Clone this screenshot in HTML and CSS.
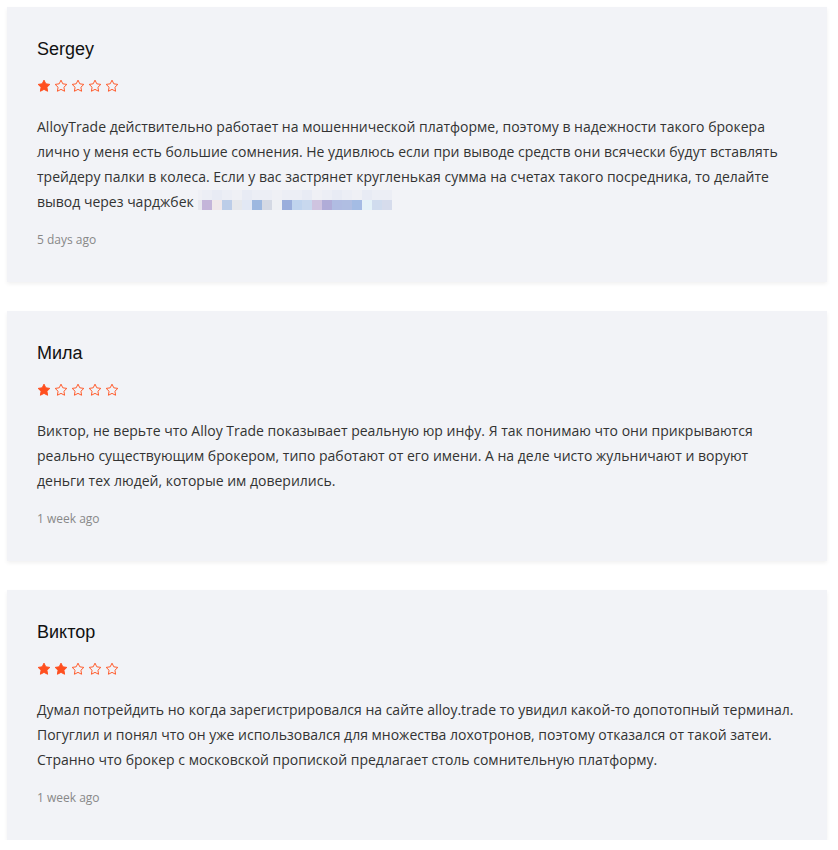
FILE: index.html
```html
<!DOCTYPE html>
<html lang="ru">
<head>
<meta charset="utf-8">
<title>Reviews</title>
<link rel="stylesheet" href="styles.css">
</head>
<body>
<svg width="0" height="0" class="defs">
  <defs>
    <polygon id="star" points="12,2 15.09,8.26 22,9.27 17,14.14 18.18,21.02 12,17.77 5.82,21.02 7,14.14 2,9.27 8.91,8.26"/>
  </defs>
</svg>
<div class="reviews">
  <div class="review">
    <div class="name">Sergey</div>
    <div class="stars">
      <svg class="star full" viewBox="0 0 24 24"><use href="#star"/></svg>
      <svg class="star" viewBox="0 0 24 24"><use href="#star"/></svg>
      <svg class="star" viewBox="0 0 24 24"><use href="#star"/></svg>
      <svg class="star" viewBox="0 0 24 24"><use href="#star"/></svg>
      <svg class="star" viewBox="0 0 24 24"><use href="#star"/></svg>
    </div>
    <p class="text">AlloyTrade действительно работает на мошеннической платформе, поэтому в надежности такого брокера лично у меня есть большие сомнения. Не удивлюсь если при выводе средств они всячески будут вставлять трейдеру палки в колеса. Если у вас застрянет кругленькая сумма на счетах такого посредника, то делайте <span class="nowrap">вывод через чарджбек <span class="blur"><span class="row top"><i></i><i></i><i></i><i></i><i></i><i></i><i></i><i></i><i></i><i></i><i></i><i></i><i></i><i></i><i></i><i></i><i></i><i></i><i></i><i></i></span><span class="row bottom"><i></i><i></i><i></i><i></i><i></i><i></i><i></i><i></i><i></i><i></i><i></i><i></i><i></i><i></i><i></i><i></i><i></i><i></i><i></i><i></i></span></span></span></p>
    <div class="date">5 days ago</div>
  </div>
  <div class="review">
    <div class="name">Мила</div>
    <div class="stars">
      <svg class="star full" viewBox="0 0 24 24"><use href="#star"/></svg>
      <svg class="star" viewBox="0 0 24 24"><use href="#star"/></svg>
      <svg class="star" viewBox="0 0 24 24"><use href="#star"/></svg>
      <svg class="star" viewBox="0 0 24 24"><use href="#star"/></svg>
      <svg class="star" viewBox="0 0 24 24"><use href="#star"/></svg>
    </div>
    <p class="text">Виктор, не верьте что Alloy Trade показывает реальную юр инфу. Я так понимаю что они прикрываются реально существующим брокером, типо работают от его имени. А на деле чисто жульничают и воруют деньги тех людей, которые им доверились.</p>
    <div class="date">1 week ago</div>
  </div>
  <div class="review">
    <div class="name">Виктор</div>
    <div class="stars">
      <svg class="star full" viewBox="0 0 24 24"><use href="#star"/></svg>
      <svg class="star full" viewBox="0 0 24 24"><use href="#star"/></svg>
      <svg class="star" viewBox="0 0 24 24"><use href="#star"/></svg>
      <svg class="star" viewBox="0 0 24 24"><use href="#star"/></svg>
      <svg class="star" viewBox="0 0 24 24"><use href="#star"/></svg>
    </div>
    <p class="text">Думал потрейдить но когда зарегистрировался на сайте alloy.trade то увидил какой-то допотопный терминал. Погуглил и понял что он уже использовался для множества лохотронов, поэтому отказался от такой затеи. Странно что брокер с московской пропиской предлагает столь сомнительную платформу.</p>
    <div class="date">1 week ago</div>
  </div>
</div>
</body>
</html>
```

FILE: styles.css
```css
* { box-sizing: border-box; }
html, body { background: #ffffff; }
body {
  margin: 0;
  padding: 7px 11px 0 7px;
  font-family: "Open Sans", "Liberation Sans", sans-serif;
}
.defs { position: absolute; width: 0; height: 0; }
.reviews {
  display: flex;
  flex-direction: column;
  gap: 29px;
  width: 820px;
}
.review {
  background: #f2f3f7;
  padding: 30px 30px 33px 30px;
  box-shadow: 0 2px 4px rgba(0, 0, 0, 0.06);
}
.name {
  font-family: "Liberation Sans", Arial, sans-serif;
  font-size: 18px;
  line-height: 24px;
  color: #111111;
}
.stars {
  display: flex;
  gap: 3px;
  margin-top: 18px;
  height: 14px;
}
.star {
  width: 14px;
  height: 14px;
  display: block;
  fill: none;
  stroke: #ff5a2a;
  stroke-width: 1.7;
  stroke-linejoin: round;
}
.star.full {
  fill: #ff4f1f;
  stroke: #ff4f1f;
}
.text {
  margin: 21px 0 0 0;
  font-size: 14px;
  line-height: 25px;
  color: #333333;
}
.nowrap { white-space: nowrap; }
.blur {
  display: inline-block;
  vertical-align: -3px;
  margin-left: 1px;
  height: 20px;
  line-height: 0;
}
.blur .row { display: flex; height: 10px; }
.blur i { display: block; width: 10px; height: 10px; }
.blur i:first-child { width: 4px; }
.blur .top i { background: #eceef5; }
.blur .top i:nth-child(3n) { background: #e8ebf4; }
.blur .top i:nth-child(4n+1) { background: #eff0f5; }
.blur .bottom i:nth-child(1) { background: #e8e8ee; }
.blur .bottom i:nth-child(2) { background: #c4b5d9; }
.blur .bottom i:nth-child(3) { background: #f0e8ea; }
.blur .bottom i:nth-child(4) { background: #bccde8; }
.blur .bottom i:nth-child(5) { background: #e6e8ec; }
.blur .bottom i:nth-child(6) { background: #e2e8f4; }
.blur .bottom i:nth-child(7) { background: #9db8e0; }
.blur .bottom i:nth-child(8) { background: #d4d9e4; }
.blur .bottom i:nth-child(9) { background: #eef0f4; }
.blur .bottom i:nth-child(10) { background: #9aaedc; }
.blur .bottom i:nth-child(11) { background: #c0d4ee; }
.blur .bottom i:nth-child(12) { background: #c8d8ee; }
.blur .bottom i:nth-child(13) { background: #cfc4e0; }
.blur .bottom i:nth-child(14) { background: #b0acd8; }
.blur .bottom i:nth-child(15) { background: #b0bce2; }
.blur .bottom i:nth-child(16) { background: #b0bee2; }
.blur .bottom i:nth-child(17) { background: #a4bce4; }
.blur .bottom i:nth-child(18) { background: #e4f2f8; }
.blur .bottom i:nth-child(19) { background: #d0dcee; }
.blur .bottom i:nth-child(20) { background: #d6dcec; }
.date {
  margin-top: 17px;
  font-size: 12px;
  line-height: 18px;
  color: #888888;
}
```
